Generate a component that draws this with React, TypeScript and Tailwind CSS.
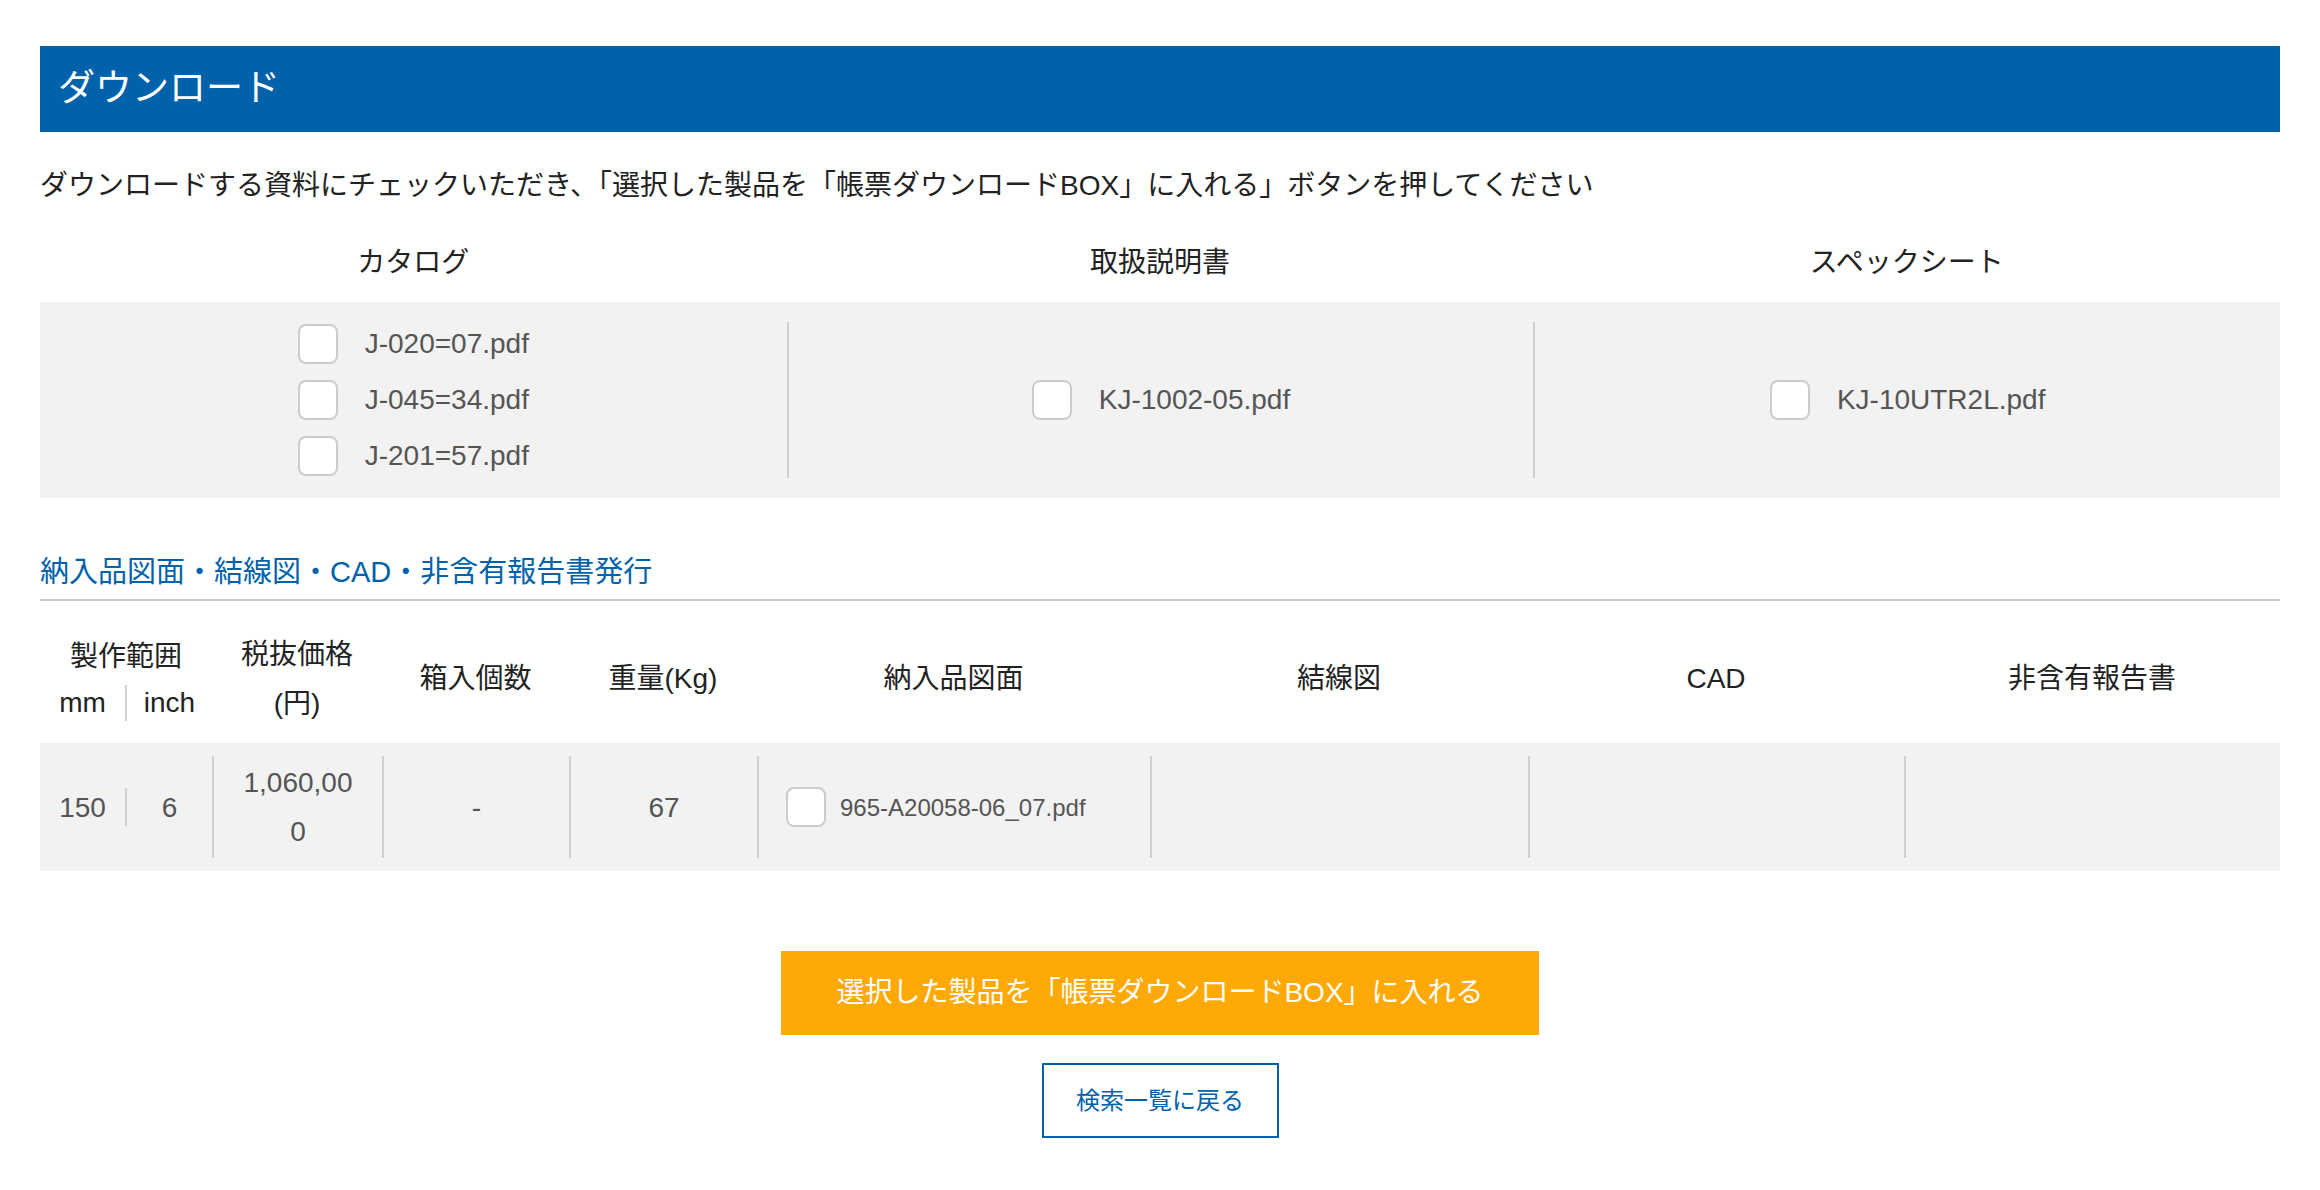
import React from "react";

const font = "font-['Liberation_Sans','Noto_Sans_CJK_JP',sans-serif]";

const Box = () => (
    <span className="block h-[40px] w-[40px] shrink-0 rounded-[8px] border-2 border-[#cccccc] bg-white" />
);

const FileItem = ({ name }: { name: string }) => (
    <label className="flex items-center gap-[27px] text-[28px] leading-[40px] text-[#555]">
        <Box />
        <span>{name}</span>
    </label>
);

const docs = [
    { title: "カタログ", files: ["J-020=07.pdf", "J-045=34.pdf", "J-201=57.pdf"] },
    { title: "取扱説明書", files: ["KJ-1002-05.pdf"] },
    { title: "スペックシート", files: ["KJ-10UTR2L.pdf"] },
];

const cols = "grid grid-cols-[172px_170px_187px_188px_393px_378px_376px_1fr]";

export default function App() {
    return (
        <div className={`${font} min-h-[1190px] w-full bg-white px-[40px] pt-[46px] text-[#222]`}>
            {/* title bar */}
            <div className="flex h-[86px] items-center bg-[#0062aa] pl-[18px]">
                <h2 className="text-[37px] text-white">ダウンロード</h2>
            </div>

            <p className="mt-[29px] text-[28px] leading-[49px]">
                ダウンロードする資料にチェックいただき、「選択した製品を「帳票ダウンロードBOX」に入れる」ボタンを押してください
            </p>

            {/* document columns */}
            <div className="mt-[28px] grid grid-cols-3 text-[28px] leading-[49px]">
                {docs.map((d) => (
                    <div key={d.title} className="text-center">{d.title}</div>
                ))}
            </div>
            <div className="mt-[15px] grid grid-cols-3 bg-[#f2f2f2] py-5">
                {docs.map((d, i) => (
                    <div
                        key={d.title}
                        className={`flex h-[156px] items-center justify-center ${i > 0 ? "border-l-2 border-[#d0d0d0]" : ""}`}
                    >
                        <div className="flex flex-col gap-4">
                            {d.files.map((f) => (
                                <FileItem key={f} name={f} />
                            ))}
                        </div>
                    </div>
                ))}
            </div>

            {/* drawings section */}
            <h3 className="mt-[50px] border-b-2 border-[#c8c8c8] pb-[2px] text-[29px] leading-[49px] text-[#0062aa]">
                納入品図面・結線図・CAD・非含有報告書発行
            </h3>

            <div className={`${cols} h-[142px] items-center pt-[13px] text-center text-[28px] leading-[49px]`}>
                <div className="flex flex-col items-center">
                    <span>製作範囲</span>
                    <div className="flex h-[44px] w-full items-center">
                        <span className="flex-1 leading-[44px]">mm</span>
                        <span className="h-[36px] w-[2px] bg-[#d0d0d0]" />
                        <span className="flex-1 leading-[44px]">inch</span>
                    </div>
                </div>
                <div>税抜価格<br />(円)</div>
                <div>箱入個数</div>
                <div>重量(Kg)</div>
                <div>納入品図面</div>
                <div>結線図</div>
                <div>CAD</div>
                <div>非含有報告書</div>
            </div>

            <div className={`${cols} h-[128px] items-stretch bg-[#f2f2f2] py-[13px] text-center text-[28px] leading-[49px] text-[#555]`}>
                <div className="flex items-center">
                    <span className="flex-1">150</span>
                    <span className="h-[38px] w-[2px] bg-[#d0d0d0]" />
                    <span className="flex-1">6</span>
                </div>
                <div className="flex items-center justify-center border-l-2 border-[#d0d0d0]">
                    <span className="w-[114px] break-all">1,060,000</span>
                </div>
                <div className="flex items-center justify-center border-l-2 border-[#d0d0d0]">-</div>
                <div className="flex items-center justify-center border-l-2 border-[#d0d0d0]">67</div>
                <div className="flex items-center gap-[14px] border-l-2 border-[#d0d0d0] pl-[27px] text-left text-[24px]">
                    <Box />
                    <span>965-A20058-06_07.pdf</span>
                </div>
                <div className="border-l-2 border-[#d0d0d0]" />
                <div className="border-l-2 border-[#d0d0d0]" />
                <div className="border-l-2 border-[#d0d0d0]" />
            </div>

            {/* actions */}
            <div className="mt-[80px] flex flex-col items-center gap-[28px] pb-10">
                <button className="flex h-[84px] w-[758px] items-center justify-center bg-[#ffa907] text-[28px] text-white">
                    選択した製品を「帳票ダウンロードBOX」に入れる
                </button>
                <button className="flex h-[75px] w-[237px] items-center justify-center border-2 border-[#0062aa] bg-white text-[24px] text-[#0062aa]">
                    検索一覧に戻る
                </button>
            </div>
        </div>
    );
}
